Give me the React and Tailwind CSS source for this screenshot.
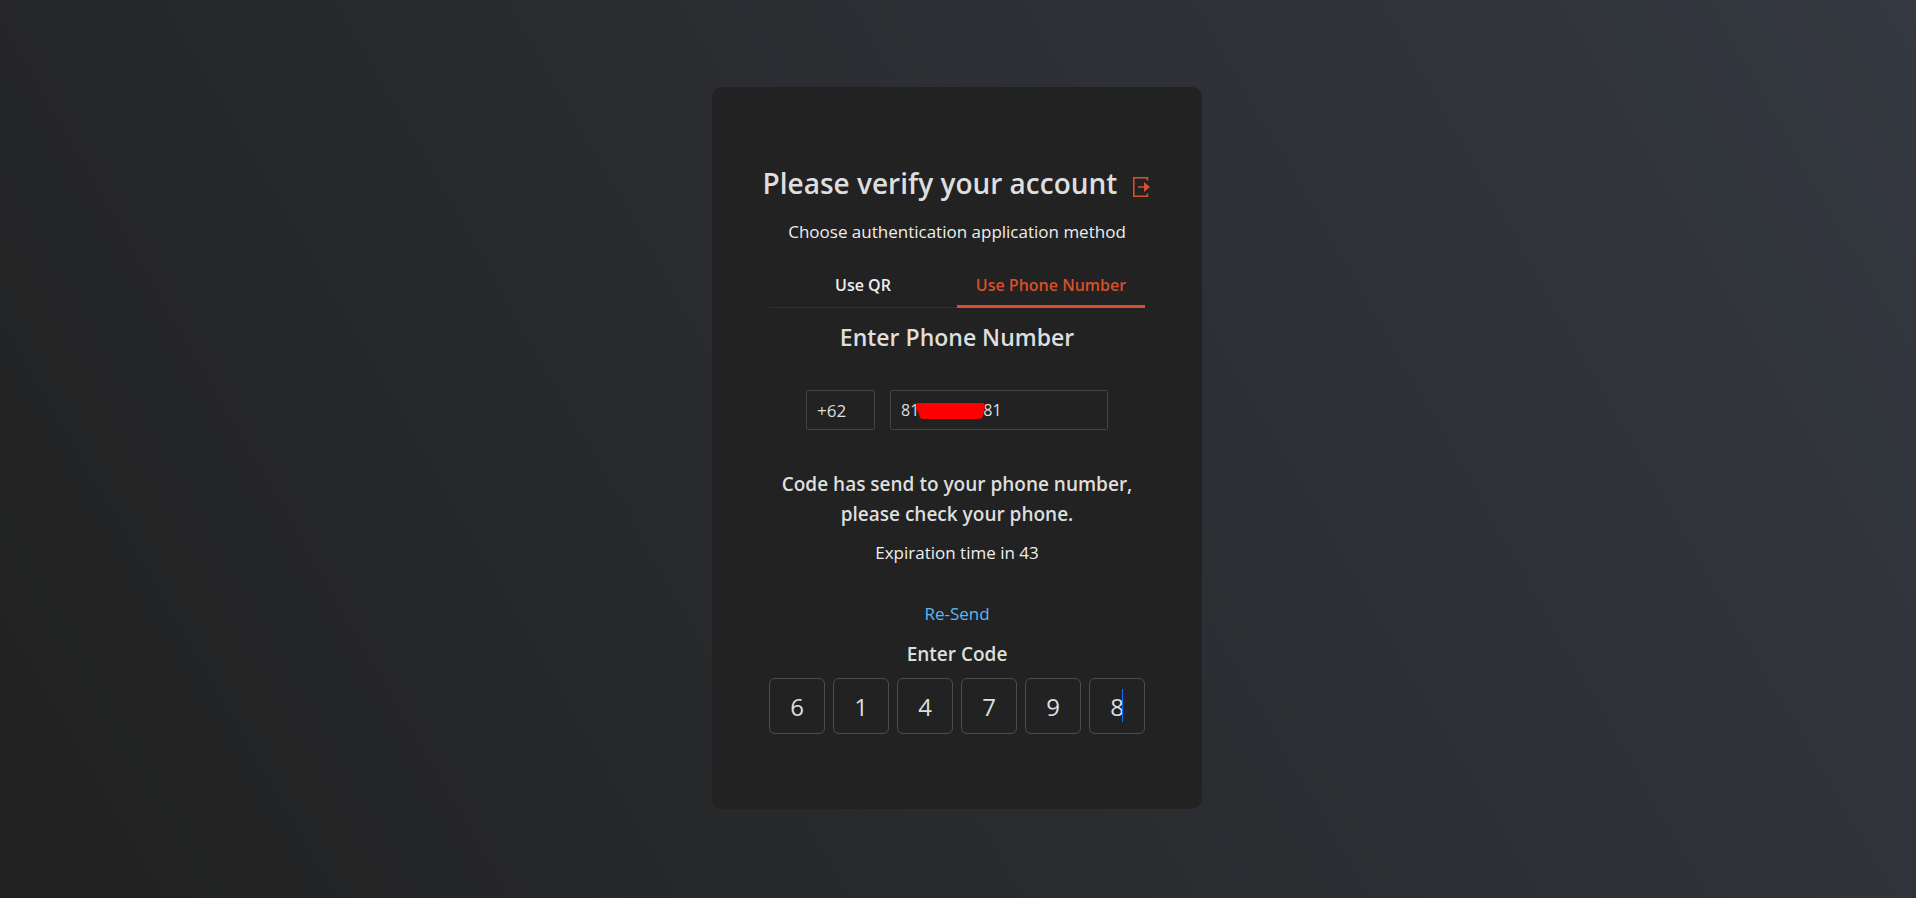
import { useState } from "react";

const tabs = ["Use QR", "Use Phone Number"];

function LogoutIcon() {
  return (
    <svg viewBox="0 0 18 20" className="h-5 w-[18px]" aria-hidden="true">
      <path d="M14.5 3.5V0.8H0.8V19.2H14.5V16.5" fill="none" stroke="#d84f2b" strokeWidth="1.6" />
      <path d="M5 9.2H11V5L17 10L11 15V10.8H5Z" fill="#d84f2b" />
    </svg>
  );
}

export default function App() {
  const [active, setActive] = useState(1);
  const [country, setCountry] = useState("+62");
  const [phone, setPhone] = useState("81000000881");
  const [code, setCode] = useState(["6", "1", "4", "7", "9", "8"]);

  const setDigit = (index, value) =>
    setCode(code.map((digit, i) => (i === index ? value.slice(-1) : digit)));

  return (
    <main className="flex min-h-screen items-center justify-center bg-linear-[60deg,#212121,#343840] pr-0.5 pb-0.5 font-['Open_Sans',sans-serif] text-[#dedede]">
      <section className="w-full max-w-[490px] rounded-[10px] bg-[#222222] px-[50px] py-[75px] text-center">
        <header className="flex items-center justify-center gap-4 whitespace-nowrap">
          <h1 className="text-[28px] leading-[42px] font-semibold">Please verify your account</h1>
          <button type="button" aria-label="Log out" className="pt-2">
            <LogoutIcon />
          </button>
        </header>
        <p className="mt-4 text-[17px] leading-6 text-[#eeeeee]">Choose authentication application method</p>

        <div className="mx-[7px]">
          <div role="tablist" className="mt-5 grid grid-cols-2 border-b border-[#303030]">
            {tabs.map((label, i) => (
              <button
                key={label}
                type="button"
                role="tab"
                aria-selected={active === i}
                onClick={() => setActive(i)}
                className={
                  active === i
                    ? "-mb-px h-11 border-b-3 border-[#d84f2b] text-base leading-6 font-semibold whitespace-nowrap text-[#d84f2b]"
                    : "-mb-px h-11 border-b-3 border-transparent text-base leading-6 font-semibold whitespace-nowrap text-[#eeeeee]"
                }
              >
                {label}
              </button>
            ))}
          </div>
          <h2 className="mt-[11px] text-[23px] leading-9 font-semibold">Enter Phone Number</h2>

          <div className="mt-[35px] flex gap-[15px] px-[37px]">
            <input
              aria-label="Country code"
              value={country}
              onChange={(e) => setCountry(e.target.value)}
              className="h-10 w-[69px] rounded-xs border border-[#444444] px-2.5 text-[17px] outline-none"
            />
            <div className="relative flex-1">
              <input
                aria-label="Phone number"
                type="tel"
                value={phone}
                onChange={(e) => setPhone(e.target.value)}
                className="h-10 w-full rounded-xs border border-[#444444] px-2.5 text-base outline-none"
              />
              <svg viewBox="0 0 70 16" className="pointer-events-none absolute top-[13px] left-[25px] h-4 w-[70px]" aria-hidden="true">
                <path d="M2 0H67Q70 0 70 4L68 13Q67 16 64 16H7Q4 15 4 11L1 5Q0 1 2 0Z" fill="#ff0000" />
              </svg>
            </div>
          </div>

          <p className="mt-[39px] text-[19px] leading-[30px] font-semibold">
            Code has send to your phone number, please check your phone.
          </p>
          <p className="mt-3 text-[17px] leading-6 text-[#eeeeee]">Expiration time in 43</p>
          <button type="button" className="mt-[37px] block w-full text-[17px] leading-6 text-[#5bb8f5]">
            Re-Send
          </button>
          <h3 className="mt-4 text-[19px] leading-6 font-semibold">Enter Code</h3>
          <div className="mt-3 grid grid-cols-6 gap-2">
            {code.map((digit, i) => (
              <div key={i} className="relative">
                <input
                  aria-label={`Digit ${i + 1}`}
                  inputMode="numeric"
                  value={digit}
                  onChange={(e) => setDigit(i, e.target.value)}
                  className="h-14 w-full rounded-md border border-[#4c4c4c] text-center text-2xl outline-none"
                />
                {i === 5 && <span className="absolute top-[11px] left-1/2 ml-[5px] h-[33px] w-px bg-[#0a6cff]" />}
              </div>
            ))}
          </div>
        </div>
      </section>
    </main>
  );
}
